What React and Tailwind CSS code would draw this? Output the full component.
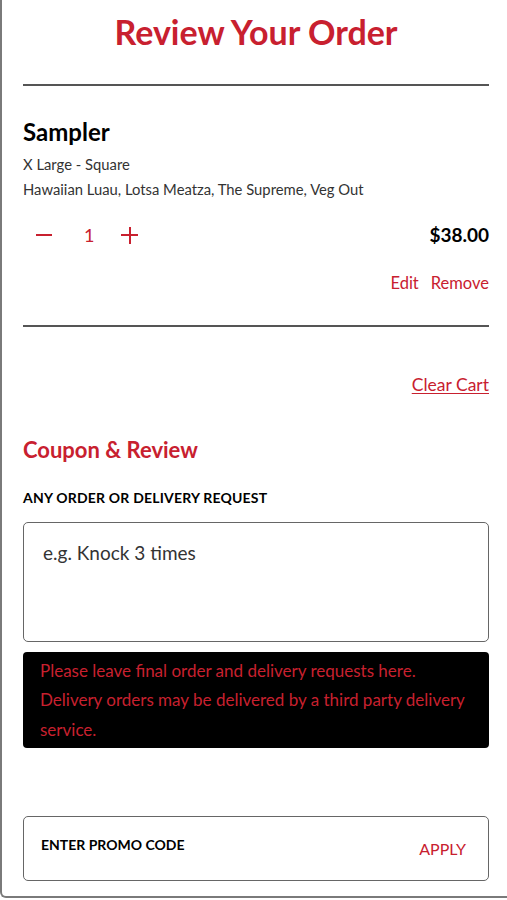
import React from "react";

export default function App() {
    return (
        <div className="w-[507px] h-[900px] bg-white" style={{ fontFamily: "Lato, 'Noto Sans', sans-serif" }}>
            <div className="h-[898px] border-l-2 border-b-2 border-[#7a7a7a] rounded-bl-md pl-[21px] pr-[18px]">
                <h1 className="pt-[12px] text-center text-[34px] font-bold leading-[40px] text-[#c8202f]">Review Your Order</h1>
                <div className="mt-[32px] h-[2px] bg-[#555]"></div>

                {/* cart item */}
                <div className="pt-[31px]">
                    <div className="text-[24px] font-bold leading-[30px] text-black">Sampler</div>
                    <div className="mt-[5px] text-[14.8px] leading-[25px] text-[#333]">X Large - Square</div>
                    <div className="text-[14.8px] leading-[25px] text-[#333]">Hawaiian Luau, Lotsa Meatza, The Supreme, Veg Out</div>
                    <div className="mt-[19px] flex items-center justify-between">
                        <div className="flex items-center text-[#c8202f]">
                            <button className="ml-[13px] w-[17px] h-[20px] flex items-center">
                                <span className="block w-[16px] h-[2px] bg-[#c8202f]"></span>
                            </button>
                            <span className="ml-[31px] text-[18px] leading-[24px]">1</span>
                            <button className="ml-[27px] relative w-[17px] h-[17px]">
                                <span className="absolute left-0 top-[7.5px] w-[17px] h-[2px] bg-[#c8202f]"></span>
                                <span className="absolute left-[7.5px] top-0 w-[2px] h-[17px] bg-[#c8202f]"></span>
                            </button>
                        </div>
                        <div className="text-[19px] font-bold text-black">$38.00</div>
                    </div>
                    <div className="mt-[21px] flex justify-end gap-[12px] text-[16.5px] text-[#c8202f]">
                        <span>Edit</span>
                        <span>Remove</span>
                    </div>
                </div>
                <div className="mt-[30px] h-[2px] bg-[#555]"></div>

                <div className="mt-[45px] flex justify-end">
                    <a className="text-[17.5px] text-[#c8202f] underline underline-offset-2">Clear Cart</a>
                </div>

                <h2 className="mt-[37px] text-[22px] font-bold leading-[28px] text-[#c8202f]">Coupon &amp; Review</h2>
                <div className="mt-[25px] text-[14px] font-bold leading-[18px] text-black tracking-[0.2px]">ANY ORDER OR DELIVERY REQUEST</div>

                <div className="mt-[15px] h-[120px] rounded-[5px] border-[1.5px] border-[#666] px-[19px] pt-[18px] text-[19px] leading-[24px] text-[#333]">
                    e.g. Knock 3 times
                </div>
                <div className="mt-[10px] rounded-[4px] bg-black pl-[17px] pr-[14px] py-[4px] text-[17px] leading-[29.5px] text-[#c8202f]">
                    Please leave final order and delivery requests here. Delivery orders may be delivered by a third party delivery service.
                </div>

                <div className="mt-[68px] h-[65px] rounded-[5px] border-[1.5px] border-[#666] flex items-start justify-between px-[17px]">
                    <span className="mt-[17px] text-[14px] font-bold text-black">ENTER PROMO CODE</span>
                    <span className="mt-[20px] mr-[5px] text-[16px] text-[#c8202f]">APPLY</span>
                </div>
            </div>
        </div>
    );
}
